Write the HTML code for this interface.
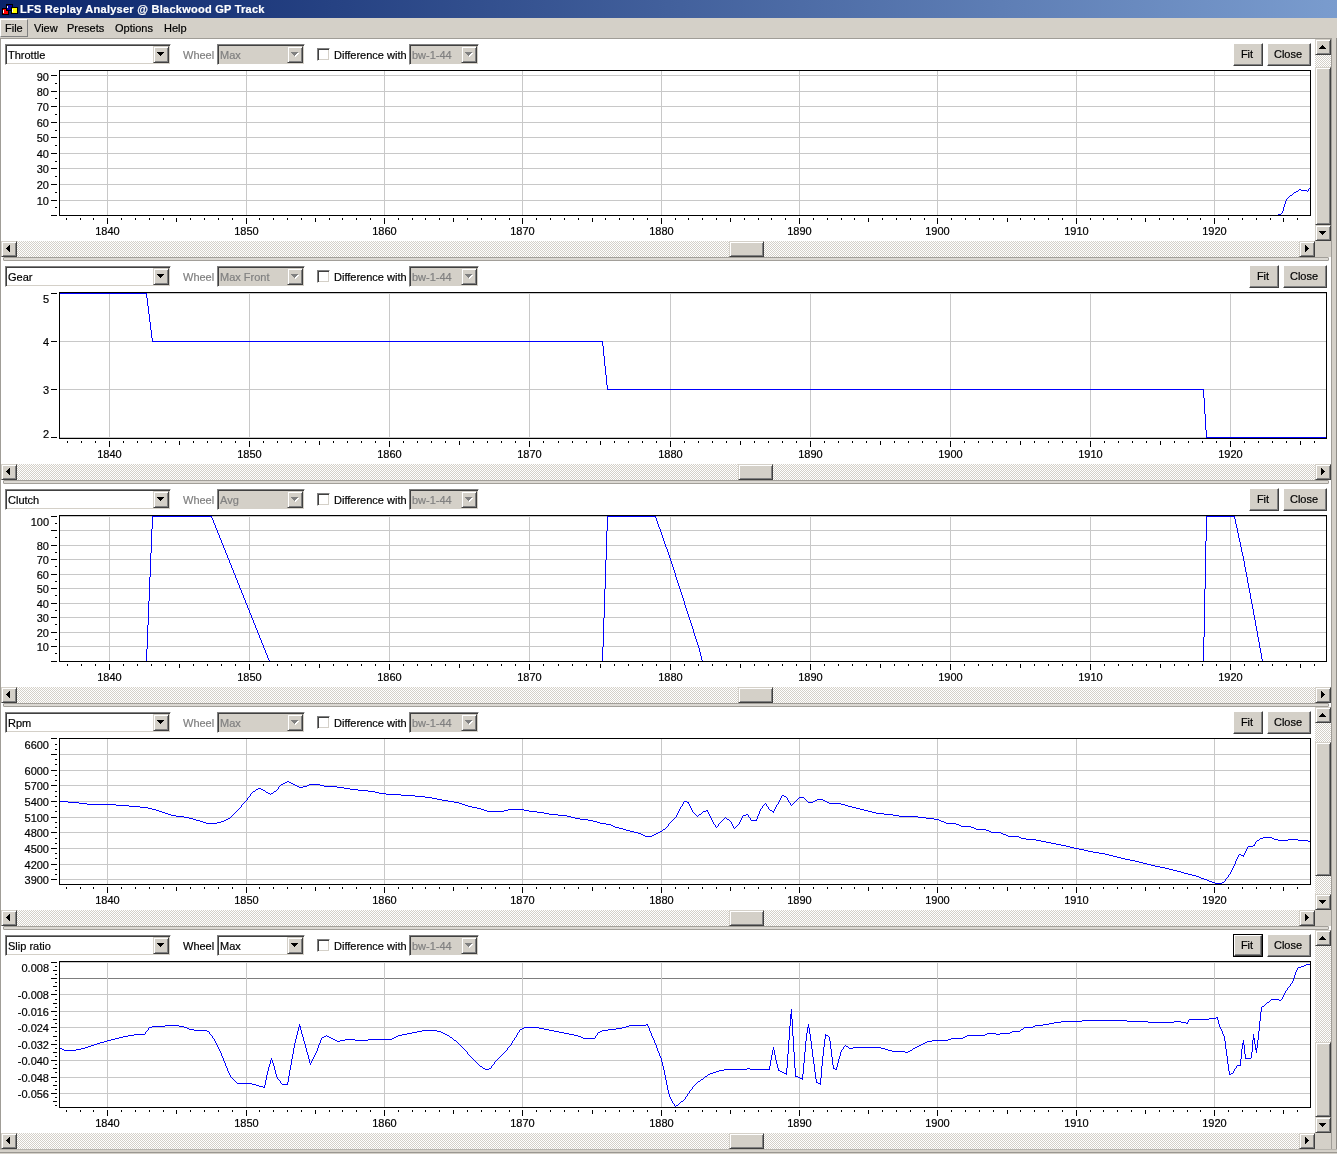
<!DOCTYPE html><html><head><meta charset="utf-8"><title>LFS Replay Analyser @ Blackwood GP Track</title><style>
*{box-sizing:border-box;margin:0;padding:0}
html,body{width:1337px;height:1154px;overflow:hidden;background:#fff}
body{position:relative;font-family:"Liberation Sans",sans-serif;font-size:11px;color:#000;line-height:13px}
.a{position:absolute}
.t{position:absolute;white-space:nowrap;line-height:13px;height:13px;-webkit-text-stroke:0.2px}
.title{left:0;top:0;width:1337px;height:18px;background:linear-gradient(90deg,#0a246a 0%,#7a9cce 100%)}
.menubar{left:0;top:18px;width:1337px;height:20px;background:#d4d0c8}
.raised{background:#d4d0c8;border:1px solid;border-color:#d4d0c8 #404040 #404040 #d4d0c8;box-shadow:inset 1px 1px 0 #fff,inset -1px -1px 0 #808080}
.btn{background:#d4d0c8;border:1px solid;border-color:#fff #404040 #404040 #fff;box-shadow:inset -1px -1px 0 #808080;text-align:center}
.sunk{border:1px solid;border-color:#808080 #fff #fff #808080;box-shadow:inset 1px 1px 0 #404040,inset -1px -1px 0 #d4d0c8}
.track{background:repeating-conic-gradient(#fff 0% 25%,#d4d0c8 0% 50%) 0 0/2px 2px}
.dis{color:#808080}
svg{position:absolute;left:0;top:0;overflow:visible}
</style></head><body><div id="root" style="position:absolute;left:0;top:0;width:1337px;height:1154px;will-change:transform">
<div class="a title"></div>
<svg width="20" height="18" viewBox="0 0 20 18" shape-rendering="crispEdges"><rect x="6" y="4" width="7" height="7" fill="#000"/><rect x="7" y="5" width="5" height="5" fill="#000094"/><rect x="7" y="6" width="1" height="3" fill="#fff"/><rect x="2" y="8" width="7" height="7" fill="#000"/><rect x="3" y="9" width="5" height="5" fill="#ff0000"/><rect x="3" y="10" width="1" height="3" fill="#fff"/><rect x="6" y="8" width="3" height="3" fill="#000"/><rect x="7" y="8" width="1" height="2" fill="#000094"/><rect x="8" y="8" width="4" height="2" fill="#000094"/><rect x="11" y="7" width="7" height="7" fill="#000"/><rect x="12" y="8" width="5" height="5" fill="#ffff00"/><rect x="12" y="9" width="1" height="3" fill="#fff"/></svg>
<div class="t" id="ttl" style="left:20px;top:3px;color:#fff;font-weight:bold;letter-spacing:0.256px">LFS Replay Analyser @ Blackwood GP Track</div>
<div class="a menubar"></div>
<div class="a" style="left:0;top:19px;width:28px;height:18px;border:1px solid;border-color:#fff #808080 #808080 #fff"></div>
<div class="t" style="left:5px;top:22px">File</div>
<div class="t" style="left:34px;top:22px">View</div>
<div class="t" style="left:67px;top:22px">Presets</div>
<div class="t" style="left:115px;top:22px">Options</div>
<div class="t" style="left:164px;top:22px">Help</div>
<div class="a" style="left:0;top:38px;width:1px;height:1116px;background:#a09d97"></div>
<div class="a" style="left:0;top:38px;width:1332px;height:1px;background:#a09d97"></div>
<div class="a" style="left:1331px;top:38px;width:6px;height:1116px;background:#d4d0c8;border-left:1px solid #a09d97;border-right:1px solid #908d87"></div>
<div class="a sunk" style="left:5px;top:44px;width:166px;height:21px;background:#fff"></div>
<div class="a raised" style="left:153px;top:46px;width:16px;height:17px"></div>
<div class="t" style="left:8px;top:49px">Throttle</div>
<div class="t dis" style="left:183px;top:49px">Wheel</div>
<div class="a sunk" style="left:217px;top:44px;width:88px;height:21px;background:#d4d0c8"></div>
<div class="a raised" style="left:287px;top:46px;width:16px;height:17px"></div>
<div class="t dis" style="left:220px;top:49px">Max</div>
<div class="a sunk" style="left:317px;top:48px;width:13px;height:13px;background:#fff"></div>
<div class="t" style="left:334px;top:49px">Difference with</div>
<div class="a sunk" style="left:409px;top:44px;width:70px;height:21px;background:#d4d0c8"></div>
<div class="a raised" style="left:461px;top:46px;width:16px;height:17px"></div>
<div class="t dis" style="left:412px;top:49px">bw-1-44</div>
<div class="a btn" style="left:1233px;top:43px;width:30px;height:23px"></div>
<div class="t" style="left:1232px;top:48px;width:30px;text-align:center">Fit</div>
<div class="a btn" style="left:1267px;top:43px;width:44px;height:23px"></div>
<div class="t" style="left:1266px;top:48px;width:44px;text-align:center">Close</div>
<div class="a track" style="left:1px;top:241px;width:1314px;height:16px"></div>
<div class="a raised" style="left:1px;top:241px;width:16px;height:16px"></div>
<div class="a raised" style="left:1299px;top:241px;width:16px;height:16px"></div>
<div class="a raised" style="left:729px;top:241px;width:35px;height:16px"></div>
<div class="a track" style="left:1315px;top:39px;width:16px;height:202px"></div>
<div class="a raised" style="left:1315px;top:39px;width:16px;height:16px"></div>
<div class="a raised" style="left:1315px;top:225px;width:16px;height:16px"></div>
<div class="a raised" style="left:1315px;top:67px;width:16px;height:158px"></div>
<div class="a" style="left:1315px;top:241px;width:16px;height:16px;background:#d4d0c8"></div>
<div class="a" style="left:3px;top:257px;width:1326px;height:4px;background:#dcd9d3;border:1px solid #a29f99;border-radius:1px"></div>
<div class="t" style="left:87px;top:225px;width:41px;text-align:center">1840</div>
<div class="t" style="left:226px;top:225px;width:41px;text-align:center">1850</div>
<div class="t" style="left:364px;top:225px;width:41px;text-align:center">1860</div>
<div class="t" style="left:502px;top:225px;width:41px;text-align:center">1870</div>
<div class="t" style="left:641px;top:225px;width:41px;text-align:center">1880</div>
<div class="t" style="left:779px;top:225px;width:41px;text-align:center">1890</div>
<div class="t" style="left:917px;top:225px;width:41px;text-align:center">1900</div>
<div class="t" style="left:1056px;top:225px;width:41px;text-align:center">1910</div>
<div class="t" style="left:1194px;top:225px;width:41px;text-align:center">1920</div>
<div class="t" style="left:0px;top:195px;width:49px;text-align:right">10</div>
<div class="t" style="left:0px;top:179px;width:49px;text-align:right">20</div>
<div class="t" style="left:0px;top:163px;width:49px;text-align:right">30</div>
<div class="t" style="left:0px;top:148px;width:49px;text-align:right">40</div>
<div class="t" style="left:0px;top:132px;width:49px;text-align:right">50</div>
<div class="t" style="left:0px;top:117px;width:49px;text-align:right">60</div>
<div class="t" style="left:0px;top:101px;width:49px;text-align:right">70</div>
<div class="t" style="left:0px;top:86px;width:49px;text-align:right">80</div>
<div class="t" style="left:0px;top:71px;width:49px;text-align:right">90</div>
<div class="a sunk" style="left:5px;top:266px;width:166px;height:21px;background:#fff"></div>
<div class="a raised" style="left:153px;top:268px;width:16px;height:17px"></div>
<div class="t" style="left:8px;top:271px">Gear</div>
<div class="t dis" style="left:183px;top:271px">Wheel</div>
<div class="a sunk" style="left:217px;top:266px;width:88px;height:21px;background:#d4d0c8"></div>
<div class="a raised" style="left:287px;top:268px;width:16px;height:17px"></div>
<div class="t dis" style="left:220px;top:271px">Max Front</div>
<div class="a sunk" style="left:317px;top:270px;width:13px;height:13px;background:#fff"></div>
<div class="t" style="left:334px;top:271px">Difference with</div>
<div class="a sunk" style="left:409px;top:266px;width:70px;height:21px;background:#d4d0c8"></div>
<div class="a raised" style="left:461px;top:268px;width:16px;height:17px"></div>
<div class="t dis" style="left:412px;top:271px">bw-1-44</div>
<div class="a btn" style="left:1249px;top:265px;width:30px;height:23px"></div>
<div class="t" style="left:1248px;top:270px;width:30px;text-align:center">Fit</div>
<div class="a btn" style="left:1283px;top:265px;width:44px;height:23px"></div>
<div class="t" style="left:1282px;top:270px;width:44px;text-align:center">Close</div>
<div class="a track" style="left:1px;top:464px;width:1330px;height:16px"></div>
<div class="a raised" style="left:1px;top:464px;width:16px;height:16px"></div>
<div class="a raised" style="left:1315px;top:464px;width:16px;height:16px"></div>
<div class="a raised" style="left:738px;top:464px;width:35px;height:16px"></div>
<div class="a" style="left:3px;top:480px;width:1326px;height:4px;background:#dcd9d3;border:1px solid #a29f99;border-radius:1px"></div>
<div class="t" style="left:89px;top:448px;width:41px;text-align:center">1840</div>
<div class="t" style="left:229px;top:448px;width:41px;text-align:center">1850</div>
<div class="t" style="left:369px;top:448px;width:41px;text-align:center">1860</div>
<div class="t" style="left:509px;top:448px;width:41px;text-align:center">1870</div>
<div class="t" style="left:650px;top:448px;width:41px;text-align:center">1880</div>
<div class="t" style="left:790px;top:448px;width:41px;text-align:center">1890</div>
<div class="t" style="left:930px;top:448px;width:41px;text-align:center">1900</div>
<div class="t" style="left:1070px;top:448px;width:41px;text-align:center">1910</div>
<div class="t" style="left:1210px;top:448px;width:41px;text-align:center">1920</div>
<div class="t" style="left:0px;top:293px;width:49px;text-align:right">5</div>
<div class="t" style="left:0px;top:336px;width:49px;text-align:right">4</div>
<div class="t" style="left:0px;top:384px;width:49px;text-align:right">3</div>
<div class="t" style="left:0px;top:428px;width:49px;text-align:right">2</div>
<div class="a sunk" style="left:5px;top:489px;width:166px;height:21px;background:#fff"></div>
<div class="a raised" style="left:153px;top:491px;width:16px;height:17px"></div>
<div class="t" style="left:8px;top:494px">Clutch</div>
<div class="t dis" style="left:183px;top:494px">Wheel</div>
<div class="a sunk" style="left:217px;top:489px;width:88px;height:21px;background:#d4d0c8"></div>
<div class="a raised" style="left:287px;top:491px;width:16px;height:17px"></div>
<div class="t dis" style="left:220px;top:494px">Avg</div>
<div class="a sunk" style="left:317px;top:493px;width:13px;height:13px;background:#fff"></div>
<div class="t" style="left:334px;top:494px">Difference with</div>
<div class="a sunk" style="left:409px;top:489px;width:70px;height:21px;background:#d4d0c8"></div>
<div class="a raised" style="left:461px;top:491px;width:16px;height:17px"></div>
<div class="t dis" style="left:412px;top:494px">bw-1-44</div>
<div class="a btn" style="left:1249px;top:488px;width:30px;height:23px"></div>
<div class="t" style="left:1248px;top:493px;width:30px;text-align:center">Fit</div>
<div class="a btn" style="left:1283px;top:488px;width:44px;height:23px"></div>
<div class="t" style="left:1282px;top:493px;width:44px;text-align:center">Close</div>
<div class="a track" style="left:1px;top:687px;width:1330px;height:16px"></div>
<div class="a raised" style="left:1px;top:687px;width:16px;height:16px"></div>
<div class="a raised" style="left:1315px;top:687px;width:16px;height:16px"></div>
<div class="a raised" style="left:738px;top:687px;width:35px;height:16px"></div>
<div class="a" style="left:3px;top:703px;width:1326px;height:4px;background:#dcd9d3;border:1px solid #a29f99;border-radius:1px"></div>
<div class="t" style="left:89px;top:671px;width:41px;text-align:center">1840</div>
<div class="t" style="left:229px;top:671px;width:41px;text-align:center">1850</div>
<div class="t" style="left:369px;top:671px;width:41px;text-align:center">1860</div>
<div class="t" style="left:509px;top:671px;width:41px;text-align:center">1870</div>
<div class="t" style="left:650px;top:671px;width:41px;text-align:center">1880</div>
<div class="t" style="left:790px;top:671px;width:41px;text-align:center">1890</div>
<div class="t" style="left:930px;top:671px;width:41px;text-align:center">1900</div>
<div class="t" style="left:1070px;top:671px;width:41px;text-align:center">1910</div>
<div class="t" style="left:1210px;top:671px;width:41px;text-align:center">1920</div>
<div class="t" style="left:0px;top:516px;width:49px;text-align:right">100</div>
<div class="t" style="left:0px;top:540px;width:49px;text-align:right">80</div>
<div class="t" style="left:0px;top:554px;width:49px;text-align:right">70</div>
<div class="t" style="left:0px;top:569px;width:49px;text-align:right">60</div>
<div class="t" style="left:0px;top:583px;width:49px;text-align:right">50</div>
<div class="t" style="left:0px;top:598px;width:49px;text-align:right">40</div>
<div class="t" style="left:0px;top:612px;width:49px;text-align:right">30</div>
<div class="t" style="left:0px;top:627px;width:49px;text-align:right">20</div>
<div class="t" style="left:0px;top:641px;width:49px;text-align:right">10</div>
<div class="a sunk" style="left:5px;top:712px;width:166px;height:21px;background:#fff"></div>
<div class="a raised" style="left:153px;top:714px;width:16px;height:17px"></div>
<div class="t" style="left:8px;top:717px">Rpm</div>
<div class="t dis" style="left:183px;top:717px">Wheel</div>
<div class="a sunk" style="left:217px;top:712px;width:88px;height:21px;background:#d4d0c8"></div>
<div class="a raised" style="left:287px;top:714px;width:16px;height:17px"></div>
<div class="t dis" style="left:220px;top:717px">Max</div>
<div class="a sunk" style="left:317px;top:716px;width:13px;height:13px;background:#fff"></div>
<div class="t" style="left:334px;top:717px">Difference with</div>
<div class="a sunk" style="left:409px;top:712px;width:70px;height:21px;background:#d4d0c8"></div>
<div class="a raised" style="left:461px;top:714px;width:16px;height:17px"></div>
<div class="t dis" style="left:412px;top:717px">bw-1-44</div>
<div class="a btn" style="left:1233px;top:711px;width:30px;height:23px"></div>
<div class="t" style="left:1232px;top:716px;width:30px;text-align:center">Fit</div>
<div class="a btn" style="left:1267px;top:711px;width:44px;height:23px"></div>
<div class="t" style="left:1266px;top:716px;width:44px;text-align:center">Close</div>
<div class="a track" style="left:1px;top:910px;width:1314px;height:16px"></div>
<div class="a raised" style="left:1px;top:910px;width:16px;height:16px"></div>
<div class="a raised" style="left:1299px;top:910px;width:16px;height:16px"></div>
<div class="a raised" style="left:729px;top:910px;width:35px;height:16px"></div>
<div class="a track" style="left:1315px;top:707px;width:16px;height:203px"></div>
<div class="a raised" style="left:1315px;top:707px;width:16px;height:16px"></div>
<div class="a raised" style="left:1315px;top:894px;width:16px;height:16px"></div>
<div class="a raised" style="left:1315px;top:742px;width:16px;height:134px"></div>
<div class="a" style="left:1315px;top:910px;width:16px;height:16px;background:#d4d0c8"></div>
<div class="a" style="left:3px;top:926px;width:1326px;height:4px;background:#dcd9d3;border:1px solid #a29f99;border-radius:1px"></div>
<div class="t" style="left:87px;top:894px;width:41px;text-align:center">1840</div>
<div class="t" style="left:226px;top:894px;width:41px;text-align:center">1850</div>
<div class="t" style="left:364px;top:894px;width:41px;text-align:center">1860</div>
<div class="t" style="left:502px;top:894px;width:41px;text-align:center">1870</div>
<div class="t" style="left:641px;top:894px;width:41px;text-align:center">1880</div>
<div class="t" style="left:779px;top:894px;width:41px;text-align:center">1890</div>
<div class="t" style="left:917px;top:894px;width:41px;text-align:center">1900</div>
<div class="t" style="left:1056px;top:894px;width:41px;text-align:center">1910</div>
<div class="t" style="left:1194px;top:894px;width:41px;text-align:center">1920</div>
<div class="t" style="left:0px;top:739px;width:49px;text-align:right">6600</div>
<div class="t" style="left:0px;top:765px;width:49px;text-align:right">6000</div>
<div class="t" style="left:0px;top:780px;width:49px;text-align:right">5700</div>
<div class="t" style="left:0px;top:796px;width:49px;text-align:right">5400</div>
<div class="t" style="left:0px;top:812px;width:49px;text-align:right">5100</div>
<div class="t" style="left:0px;top:827px;width:49px;text-align:right">4800</div>
<div class="t" style="left:0px;top:843px;width:49px;text-align:right">4500</div>
<div class="t" style="left:0px;top:859px;width:49px;text-align:right">4200</div>
<div class="t" style="left:0px;top:874px;width:49px;text-align:right">3900</div>
<div class="a sunk" style="left:5px;top:935px;width:166px;height:21px;background:#fff"></div>
<div class="a raised" style="left:153px;top:937px;width:16px;height:17px"></div>
<div class="t" style="left:8px;top:940px">Slip ratio</div>
<div class="t" style="left:183px;top:940px">Wheel</div>
<div class="a sunk" style="left:217px;top:935px;width:88px;height:21px;background:#fff"></div>
<div class="a raised" style="left:287px;top:937px;width:16px;height:17px"></div>
<div class="t" style="left:220px;top:940px">Max</div>
<div class="a sunk" style="left:317px;top:939px;width:13px;height:13px;background:#fff"></div>
<div class="t" style="left:334px;top:940px">Difference with</div>
<div class="a sunk" style="left:409px;top:935px;width:70px;height:21px;background:#d4d0c8"></div>
<div class="a raised" style="left:461px;top:937px;width:16px;height:17px"></div>
<div class="t dis" style="left:412px;top:940px">bw-1-44</div>
<div class="a" style="left:1233px;top:934px;width:30px;height:23px;background:#000"></div>
<div class="a btn" style="left:1234px;top:935px;width:28px;height:21px"></div>
<div class="t" style="left:1232px;top:939px;width:30px;text-align:center">Fit</div>
<div class="a btn" style="left:1267px;top:934px;width:44px;height:23px"></div>
<div class="t" style="left:1266px;top:939px;width:44px;text-align:center">Close</div>
<div class="a track" style="left:1px;top:1133px;width:1314px;height:16px"></div>
<div class="a raised" style="left:1px;top:1133px;width:16px;height:16px"></div>
<div class="a raised" style="left:1299px;top:1133px;width:16px;height:16px"></div>
<div class="a raised" style="left:729px;top:1133px;width:35px;height:16px"></div>
<div class="a track" style="left:1315px;top:930px;width:16px;height:203px"></div>
<div class="a raised" style="left:1315px;top:930px;width:16px;height:16px"></div>
<div class="a raised" style="left:1315px;top:1117px;width:16px;height:16px"></div>
<div class="a raised" style="left:1315px;top:1042px;width:16px;height:75px"></div>
<div class="a" style="left:1315px;top:1133px;width:16px;height:16px;background:#d4d0c8"></div>
<div class="a" style="left:0;top:1149px;width:1337px;height:5px;background:#d4d0c8;border-top:1px solid #b8b5ae"></div>
<div class="a" style="left:0;top:1152px;width:1337px;height:1px;background:#9a9791"></div>
<div class="t" style="left:87px;top:1117px;width:41px;text-align:center">1840</div>
<div class="t" style="left:226px;top:1117px;width:41px;text-align:center">1850</div>
<div class="t" style="left:364px;top:1117px;width:41px;text-align:center">1860</div>
<div class="t" style="left:502px;top:1117px;width:41px;text-align:center">1870</div>
<div class="t" style="left:641px;top:1117px;width:41px;text-align:center">1880</div>
<div class="t" style="left:779px;top:1117px;width:41px;text-align:center">1890</div>
<div class="t" style="left:917px;top:1117px;width:41px;text-align:center">1900</div>
<div class="t" style="left:1056px;top:1117px;width:41px;text-align:center">1910</div>
<div class="t" style="left:1194px;top:1117px;width:41px;text-align:center">1920</div>
<div class="t" style="left:0px;top:962px;width:49px;text-align:right">0.008</div>
<div class="t" style="left:0px;top:989px;width:49px;text-align:right">-0.008</div>
<div class="t" style="left:0px;top:1006px;width:49px;text-align:right">-0.016</div>
<div class="t" style="left:0px;top:1022px;width:49px;text-align:right">-0.024</div>
<div class="t" style="left:0px;top:1039px;width:49px;text-align:right">-0.032</div>
<div class="t" style="left:0px;top:1055px;width:49px;text-align:right">-0.040</div>
<div class="t" style="left:0px;top:1072px;width:49px;text-align:right">-0.048</div>
<div class="t" style="left:0px;top:1088px;width:49px;text-align:right">-0.056</div>
<svg width="1337" height="1154" viewBox="0 0 1337 1154" shape-rendering="crispEdges"><rect x="60" y="200" width="1250" height="1" fill="#c8c8c8"/><rect x="60" y="184" width="1250" height="1" fill="#c8c8c8"/><rect x="60" y="168" width="1250" height="1" fill="#c8c8c8"/><rect x="60" y="153" width="1250" height="1" fill="#c8c8c8"/><rect x="60" y="137" width="1250" height="1" fill="#c8c8c8"/><rect x="60" y="122" width="1250" height="1" fill="#c8c8c8"/><rect x="60" y="106" width="1250" height="1" fill="#c8c8c8"/><rect x="60" y="91" width="1250" height="1" fill="#c8c8c8"/><rect x="60" y="75" width="1250" height="1" fill="#c8c8c8"/><rect x="107" y="71" width="1" height="144" fill="#c8c8c8"/><rect x="246" y="71" width="1" height="144" fill="#c8c8c8"/><rect x="384" y="71" width="1" height="144" fill="#c8c8c8"/><rect x="522" y="71" width="1" height="144" fill="#c8c8c8"/><rect x="661" y="71" width="1" height="144" fill="#c8c8c8"/><rect x="799" y="71" width="1" height="144" fill="#c8c8c8"/><rect x="937" y="71" width="1" height="144" fill="#c8c8c8"/><rect x="1076" y="71" width="1" height="144" fill="#c8c8c8"/><rect x="1214" y="71" width="1" height="144" fill="#c8c8c8"/><path fill="none" stroke="#00f" stroke-width="1" d="M1278 214.5h3M1281 213.5h1M1287 198.5h1M1288 197.5h1M1289 196.5h1M1290 195.5h2M1292 194.5h1M1293 193.5h1M1294 192.5h2M1296 191.5h2M1298 190.5h1M1299 189.5h2M1301 190.5h6M1307 191.5h1M1309 188.5h1M1282.5 211v2M1283.5 207v4M1284.5 204v3M1285.5 201v3M1286.5 199v2M1308.5 189v2"/><rect x="59" y="70" width="1252" height="1" fill="#000"/><rect x="59" y="215" width="1252" height="1" fill="#000"/><rect x="59" y="70" width="1" height="146" fill="#000"/><rect x="1310" y="70" width="1" height="146" fill="#000"/><rect x="66" y="218" width="1" height="2" fill="#000"/><rect x="80" y="218" width="1" height="2" fill="#000"/><rect x="93" y="218" width="1" height="2" fill="#000"/><rect x="107" y="218" width="1" height="6" fill="#000"/><rect x="121" y="218" width="1" height="2" fill="#000"/><rect x="135" y="218" width="1" height="2" fill="#000"/><rect x="149" y="218" width="1" height="2" fill="#000"/><rect x="163" y="218" width="1" height="2" fill="#000"/><rect x="176" y="218" width="1" height="4" fill="#000"/><rect x="190" y="218" width="1" height="2" fill="#000"/><rect x="204" y="218" width="1" height="2" fill="#000"/><rect x="218" y="218" width="1" height="2" fill="#000"/><rect x="232" y="218" width="1" height="2" fill="#000"/><rect x="246" y="218" width="1" height="6" fill="#000"/><rect x="259" y="218" width="1" height="2" fill="#000"/><rect x="273" y="218" width="1" height="2" fill="#000"/><rect x="287" y="218" width="1" height="2" fill="#000"/><rect x="301" y="218" width="1" height="2" fill="#000"/><rect x="315" y="218" width="1" height="4" fill="#000"/><rect x="329" y="218" width="1" height="2" fill="#000"/><rect x="342" y="218" width="1" height="2" fill="#000"/><rect x="356" y="218" width="1" height="2" fill="#000"/><rect x="370" y="218" width="1" height="2" fill="#000"/><rect x="384" y="218" width="1" height="6" fill="#000"/><rect x="398" y="218" width="1" height="2" fill="#000"/><rect x="412" y="218" width="1" height="2" fill="#000"/><rect x="425" y="218" width="1" height="2" fill="#000"/><rect x="439" y="218" width="1" height="2" fill="#000"/><rect x="453" y="218" width="1" height="4" fill="#000"/><rect x="467" y="218" width="1" height="2" fill="#000"/><rect x="481" y="218" width="1" height="2" fill="#000"/><rect x="495" y="218" width="1" height="2" fill="#000"/><rect x="509" y="218" width="1" height="2" fill="#000"/><rect x="522" y="218" width="1" height="6" fill="#000"/><rect x="536" y="218" width="1" height="2" fill="#000"/><rect x="550" y="218" width="1" height="2" fill="#000"/><rect x="564" y="218" width="1" height="2" fill="#000"/><rect x="578" y="218" width="1" height="2" fill="#000"/><rect x="592" y="218" width="1" height="4" fill="#000"/><rect x="605" y="218" width="1" height="2" fill="#000"/><rect x="619" y="218" width="1" height="2" fill="#000"/><rect x="633" y="218" width="1" height="2" fill="#000"/><rect x="647" y="218" width="1" height="2" fill="#000"/><rect x="661" y="218" width="1" height="6" fill="#000"/><rect x="675" y="218" width="1" height="2" fill="#000"/><rect x="688" y="218" width="1" height="2" fill="#000"/><rect x="702" y="218" width="1" height="2" fill="#000"/><rect x="716" y="218" width="1" height="2" fill="#000"/><rect x="730" y="218" width="1" height="4" fill="#000"/><rect x="744" y="218" width="1" height="2" fill="#000"/><rect x="758" y="218" width="1" height="2" fill="#000"/><rect x="771" y="218" width="1" height="2" fill="#000"/><rect x="785" y="218" width="1" height="2" fill="#000"/><rect x="799" y="218" width="1" height="6" fill="#000"/><rect x="813" y="218" width="1" height="2" fill="#000"/><rect x="827" y="218" width="1" height="2" fill="#000"/><rect x="841" y="218" width="1" height="2" fill="#000"/><rect x="854" y="218" width="1" height="2" fill="#000"/><rect x="868" y="218" width="1" height="4" fill="#000"/><rect x="882" y="218" width="1" height="2" fill="#000"/><rect x="896" y="218" width="1" height="2" fill="#000"/><rect x="910" y="218" width="1" height="2" fill="#000"/><rect x="924" y="218" width="1" height="2" fill="#000"/><rect x="937" y="218" width="1" height="6" fill="#000"/><rect x="951" y="218" width="1" height="2" fill="#000"/><rect x="965" y="218" width="1" height="2" fill="#000"/><rect x="979" y="218" width="1" height="2" fill="#000"/><rect x="993" y="218" width="1" height="2" fill="#000"/><rect x="1007" y="218" width="1" height="4" fill="#000"/><rect x="1020" y="218" width="1" height="2" fill="#000"/><rect x="1034" y="218" width="1" height="2" fill="#000"/><rect x="1048" y="218" width="1" height="2" fill="#000"/><rect x="1062" y="218" width="1" height="2" fill="#000"/><rect x="1076" y="218" width="1" height="6" fill="#000"/><rect x="1090" y="218" width="1" height="2" fill="#000"/><rect x="1103" y="218" width="1" height="2" fill="#000"/><rect x="1117" y="218" width="1" height="2" fill="#000"/><rect x="1131" y="218" width="1" height="2" fill="#000"/><rect x="1145" y="218" width="1" height="4" fill="#000"/><rect x="1159" y="218" width="1" height="2" fill="#000"/><rect x="1173" y="218" width="1" height="2" fill="#000"/><rect x="1187" y="218" width="1" height="2" fill="#000"/><rect x="1200" y="218" width="1" height="2" fill="#000"/><rect x="1214" y="218" width="1" height="6" fill="#000"/><rect x="1228" y="218" width="1" height="2" fill="#000"/><rect x="1242" y="218" width="1" height="2" fill="#000"/><rect x="1256" y="218" width="1" height="2" fill="#000"/><rect x="1270" y="218" width="1" height="2" fill="#000"/><rect x="1283" y="218" width="1" height="4" fill="#000"/><rect x="1297" y="218" width="1" height="2" fill="#000"/><rect x="51" y="215" width="6" height="1" fill="#000"/><rect x="51" y="200" width="6" height="1" fill="#000"/><rect x="51" y="184" width="6" height="1" fill="#000"/><rect x="51" y="168" width="6" height="1" fill="#000"/><rect x="51" y="153" width="6" height="1" fill="#000"/><rect x="51" y="137" width="6" height="1" fill="#000"/><rect x="51" y="122" width="6" height="1" fill="#000"/><rect x="51" y="106" width="6" height="1" fill="#000"/><rect x="51" y="91" width="6" height="1" fill="#000"/><rect x="51" y="75" width="6" height="1" fill="#000"/><rect x="55" y="83" width="2" height="1" fill="#000"/><rect x="55" y="98" width="2" height="1" fill="#000"/><rect x="55" y="114" width="2" height="1" fill="#000"/><rect x="55" y="130" width="2" height="1" fill="#000"/><rect x="55" y="145" width="2" height="1" fill="#000"/><rect x="55" y="161" width="2" height="1" fill="#000"/><rect x="55" y="176" width="2" height="1" fill="#000"/><rect x="55" y="192" width="2" height="1" fill="#000"/><rect x="55" y="207" width="2" height="1" fill="#000"/><rect x="60" y="293" width="1266" height="1" fill="#c8c8c8"/><rect x="60" y="341" width="1266" height="1" fill="#c8c8c8"/><rect x="60" y="389" width="1266" height="1" fill="#c8c8c8"/><rect x="60" y="437" width="1266" height="1" fill="#c8c8c8"/><rect x="109" y="293" width="1" height="145" fill="#c8c8c8"/><rect x="249" y="293" width="1" height="145" fill="#c8c8c8"/><rect x="389" y="293" width="1" height="145" fill="#c8c8c8"/><rect x="529" y="293" width="1" height="145" fill="#c8c8c8"/><rect x="670" y="293" width="1" height="145" fill="#c8c8c8"/><rect x="810" y="293" width="1" height="145" fill="#c8c8c8"/><rect x="950" y="293" width="1" height="145" fill="#c8c8c8"/><rect x="1090" y="293" width="1" height="145" fill="#c8c8c8"/><rect x="1230" y="293" width="1" height="145" fill="#c8c8c8"/><path fill="none" stroke="#00f" stroke-width="1" d="M60 293.5h86M153 341.5h449M608 389.5h595M1207 437.5h119M146.5 293v5M147.5 298v8M148.5 306v8M149.5 314v8M150.5 322v8M151.5 330v8M152.5 338v4M602.5 341v5M603.5 346v10M604.5 356v10M605.5 366v9M606.5 375v10M607.5 385v5M1203.5 389v9M1204.5 398v16M1205.5 414v16M1206.5 430v8"/><rect x="59" y="292" width="1268" height="1" fill="#000"/><rect x="59" y="438" width="1268" height="1" fill="#000"/><rect x="59" y="292" width="1" height="147" fill="#000"/><rect x="1326" y="292" width="1" height="147" fill="#000"/><rect x="67" y="441" width="1" height="2" fill="#000"/><rect x="81" y="441" width="1" height="2" fill="#000"/><rect x="95" y="441" width="1" height="2" fill="#000"/><rect x="109" y="441" width="1" height="6" fill="#000"/><rect x="123" y="441" width="1" height="2" fill="#000"/><rect x="137" y="441" width="1" height="2" fill="#000"/><rect x="151" y="441" width="1" height="2" fill="#000"/><rect x="165" y="441" width="1" height="2" fill="#000"/><rect x="179" y="441" width="1" height="4" fill="#000"/><rect x="193" y="441" width="1" height="2" fill="#000"/><rect x="207" y="441" width="1" height="2" fill="#000"/><rect x="221" y="441" width="1" height="2" fill="#000"/><rect x="235" y="441" width="1" height="2" fill="#000"/><rect x="249" y="441" width="1" height="6" fill="#000"/><rect x="263" y="441" width="1" height="2" fill="#000"/><rect x="277" y="441" width="1" height="2" fill="#000"/><rect x="291" y="441" width="1" height="2" fill="#000"/><rect x="305" y="441" width="1" height="2" fill="#000"/><rect x="319" y="441" width="1" height="4" fill="#000"/><rect x="333" y="441" width="1" height="2" fill="#000"/><rect x="347" y="441" width="1" height="2" fill="#000"/><rect x="361" y="441" width="1" height="2" fill="#000"/><rect x="375" y="441" width="1" height="2" fill="#000"/><rect x="389" y="441" width="1" height="6" fill="#000"/><rect x="403" y="441" width="1" height="2" fill="#000"/><rect x="417" y="441" width="1" height="2" fill="#000"/><rect x="431" y="441" width="1" height="2" fill="#000"/><rect x="445" y="441" width="1" height="2" fill="#000"/><rect x="459" y="441" width="1" height="4" fill="#000"/><rect x="473" y="441" width="1" height="2" fill="#000"/><rect x="487" y="441" width="1" height="2" fill="#000"/><rect x="501" y="441" width="1" height="2" fill="#000"/><rect x="515" y="441" width="1" height="2" fill="#000"/><rect x="529" y="441" width="1" height="6" fill="#000"/><rect x="543" y="441" width="1" height="2" fill="#000"/><rect x="558" y="441" width="1" height="2" fill="#000"/><rect x="572" y="441" width="1" height="2" fill="#000"/><rect x="586" y="441" width="1" height="2" fill="#000"/><rect x="600" y="441" width="1" height="4" fill="#000"/><rect x="614" y="441" width="1" height="2" fill="#000"/><rect x="628" y="441" width="1" height="2" fill="#000"/><rect x="642" y="441" width="1" height="2" fill="#000"/><rect x="656" y="441" width="1" height="2" fill="#000"/><rect x="670" y="441" width="1" height="6" fill="#000"/><rect x="684" y="441" width="1" height="2" fill="#000"/><rect x="698" y="441" width="1" height="2" fill="#000"/><rect x="712" y="441" width="1" height="2" fill="#000"/><rect x="726" y="441" width="1" height="2" fill="#000"/><rect x="740" y="441" width="1" height="4" fill="#000"/><rect x="754" y="441" width="1" height="2" fill="#000"/><rect x="768" y="441" width="1" height="2" fill="#000"/><rect x="782" y="441" width="1" height="2" fill="#000"/><rect x="796" y="441" width="1" height="2" fill="#000"/><rect x="810" y="441" width="1" height="6" fill="#000"/><rect x="824" y="441" width="1" height="2" fill="#000"/><rect x="838" y="441" width="1" height="2" fill="#000"/><rect x="852" y="441" width="1" height="2" fill="#000"/><rect x="866" y="441" width="1" height="2" fill="#000"/><rect x="880" y="441" width="1" height="4" fill="#000"/><rect x="894" y="441" width="1" height="2" fill="#000"/><rect x="908" y="441" width="1" height="2" fill="#000"/><rect x="922" y="441" width="1" height="2" fill="#000"/><rect x="936" y="441" width="1" height="2" fill="#000"/><rect x="950" y="441" width="1" height="6" fill="#000"/><rect x="964" y="441" width="1" height="2" fill="#000"/><rect x="978" y="441" width="1" height="2" fill="#000"/><rect x="992" y="441" width="1" height="2" fill="#000"/><rect x="1006" y="441" width="1" height="2" fill="#000"/><rect x="1020" y="441" width="1" height="4" fill="#000"/><rect x="1034" y="441" width="1" height="2" fill="#000"/><rect x="1048" y="441" width="1" height="2" fill="#000"/><rect x="1062" y="441" width="1" height="2" fill="#000"/><rect x="1076" y="441" width="1" height="2" fill="#000"/><rect x="1090" y="441" width="1" height="6" fill="#000"/><rect x="1104" y="441" width="1" height="2" fill="#000"/><rect x="1118" y="441" width="1" height="2" fill="#000"/><rect x="1132" y="441" width="1" height="2" fill="#000"/><rect x="1146" y="441" width="1" height="2" fill="#000"/><rect x="1160" y="441" width="1" height="4" fill="#000"/><rect x="1174" y="441" width="1" height="2" fill="#000"/><rect x="1188" y="441" width="1" height="2" fill="#000"/><rect x="1202" y="441" width="1" height="2" fill="#000"/><rect x="1216" y="441" width="1" height="2" fill="#000"/><rect x="1230" y="441" width="1" height="6" fill="#000"/><rect x="1244" y="441" width="1" height="2" fill="#000"/><rect x="1258" y="441" width="1" height="2" fill="#000"/><rect x="1272" y="441" width="1" height="2" fill="#000"/><rect x="1286" y="441" width="1" height="2" fill="#000"/><rect x="1300" y="441" width="1" height="4" fill="#000"/><rect x="1314" y="441" width="1" height="2" fill="#000"/><rect x="51" y="293" width="6" height="1" fill="#000"/><rect x="51" y="341" width="6" height="1" fill="#000"/><rect x="51" y="389" width="6" height="1" fill="#000"/><rect x="51" y="437" width="6" height="1" fill="#000"/><rect x="60" y="646" width="1266" height="1" fill="#c8c8c8"/><rect x="60" y="632" width="1266" height="1" fill="#c8c8c8"/><rect x="60" y="617" width="1266" height="1" fill="#c8c8c8"/><rect x="60" y="603" width="1266" height="1" fill="#c8c8c8"/><rect x="60" y="588" width="1266" height="1" fill="#c8c8c8"/><rect x="60" y="574" width="1266" height="1" fill="#c8c8c8"/><rect x="60" y="559" width="1266" height="1" fill="#c8c8c8"/><rect x="60" y="545" width="1266" height="1" fill="#c8c8c8"/><rect x="60" y="530" width="1266" height="1" fill="#c8c8c8"/><rect x="60" y="516" width="1266" height="1" fill="#c8c8c8"/><rect x="109" y="516" width="1" height="145" fill="#c8c8c8"/><rect x="249" y="516" width="1" height="145" fill="#c8c8c8"/><rect x="389" y="516" width="1" height="145" fill="#c8c8c8"/><rect x="529" y="516" width="1" height="145" fill="#c8c8c8"/><rect x="670" y="516" width="1" height="145" fill="#c8c8c8"/><rect x="810" y="516" width="1" height="145" fill="#c8c8c8"/><rect x="950" y="516" width="1" height="145" fill="#c8c8c8"/><rect x="1090" y="516" width="1" height="145" fill="#c8c8c8"/><rect x="1230" y="516" width="1" height="145" fill="#c8c8c8"/><path fill="none" stroke="#00f" stroke-width="1" d="M153 516.5h58M146.5 649v13M147.5 625v24M148.5 601v24M149.5 577v24M150.5 553v24M151.5 529v24M152.5 516v13M211.5 516v2M212.5 518v2M213.5 520v3M214.5 523v2M215.5 525v3M216.5 528v2M217.5 530v3M218.5 533v2M219.5 535v3M220.5 538v2M221.5 540v3M222.5 543v2M223.5 545v3M224.5 548v2M225.5 550v3M226.5 553v2M227.5 555v3M228.5 558v2M229.5 560v3M230.5 563v2M231.5 565v3M232.5 568v2M233.5 570v3M234.5 573v2M235.5 575v3M236.5 578v2M237.5 580v3M238.5 583v2M239.5 585v3M240.5 588v2M241.5 590v3M242.5 593v2M243.5 595v3M244.5 598v2M245.5 600v3M246.5 603v2M247.5 605v3M248.5 608v2M249.5 610v3M250.5 613v2M251.5 615v3M252.5 618v2M253.5 620v3M254.5 623v2M255.5 625v3M256.5 628v2M257.5 630v3M258.5 633v2M259.5 635v3M260.5 638v2M261.5 640v3M262.5 643v2M263.5 645v3M264.5 648v2M265.5 650v3M266.5 653v2M267.5 655v3M268.5 658v2M269.5 660v2"/><path fill="none" stroke="#00f" stroke-width="1" d="M608 516.5h47M602.5 647v15M603.5 618v29M604.5 589v29M605.5 560v29M606.5 531v29M607.5 516v15M655.5 516v2M656.5 518v3M657.5 521v3M658.5 524v3M659.5 527v2M660.5 529v3M661.5 532v3M662.5 535v3M663.5 538v3M664.5 541v3M665.5 544v3M666.5 547v2M667.5 549v3M668.5 552v3M669.5 555v3M670.5 558v3M671.5 561v3M672.5 564v3M673.5 567v3M674.5 570v3M675.5 573v4M676.5 577v3M677.5 580v3M678.5 583v3M679.5 586v3M680.5 589v3M681.5 592v3M682.5 595v3M683.5 598v3M684.5 601v4M685.5 605v3M686.5 608v3M687.5 611v3M688.5 614v3M689.5 617v3M690.5 620v3M691.5 623v3M692.5 626v3M693.5 629v4M694.5 633v3M695.5 636v3M696.5 639v3M697.5 642v3M698.5 645v3M699.5 648v4M700.5 652v4M701.5 656v4M702.5 660v2"/><path fill="none" stroke="#00f" stroke-width="1" d="M1207 516.5h27M1203.5 637v25M1204.5 589v48M1205.5 541v48M1206.5 516v25M1234.5 516v3M1235.5 519v5M1236.5 524v4M1237.5 528v5M1238.5 533v5M1239.5 538v4M1240.5 542v5M1241.5 547v5M1242.5 552v4M1243.5 556v5M1244.5 561v6M1245.5 567v5M1246.5 572v5M1247.5 577v6M1248.5 583v5M1249.5 588v5M1250.5 593v6M1251.5 599v5M1252.5 604v5M1253.5 609v6M1254.5 615v5M1255.5 620v6M1256.5 626v5M1257.5 631v6M1258.5 637v5M1259.5 642v6M1260.5 648v5M1261.5 653v6M1262.5 659v3"/><rect x="59" y="515" width="1268" height="1" fill="#000"/><rect x="59" y="661" width="1268" height="1" fill="#000"/><rect x="59" y="515" width="1" height="147" fill="#000"/><rect x="1326" y="515" width="1" height="147" fill="#000"/><rect x="67" y="664" width="1" height="2" fill="#000"/><rect x="81" y="664" width="1" height="2" fill="#000"/><rect x="95" y="664" width="1" height="2" fill="#000"/><rect x="109" y="664" width="1" height="6" fill="#000"/><rect x="123" y="664" width="1" height="2" fill="#000"/><rect x="137" y="664" width="1" height="2" fill="#000"/><rect x="151" y="664" width="1" height="2" fill="#000"/><rect x="165" y="664" width="1" height="2" fill="#000"/><rect x="179" y="664" width="1" height="4" fill="#000"/><rect x="193" y="664" width="1" height="2" fill="#000"/><rect x="207" y="664" width="1" height="2" fill="#000"/><rect x="221" y="664" width="1" height="2" fill="#000"/><rect x="235" y="664" width="1" height="2" fill="#000"/><rect x="249" y="664" width="1" height="6" fill="#000"/><rect x="263" y="664" width="1" height="2" fill="#000"/><rect x="277" y="664" width="1" height="2" fill="#000"/><rect x="291" y="664" width="1" height="2" fill="#000"/><rect x="305" y="664" width="1" height="2" fill="#000"/><rect x="319" y="664" width="1" height="4" fill="#000"/><rect x="333" y="664" width="1" height="2" fill="#000"/><rect x="347" y="664" width="1" height="2" fill="#000"/><rect x="361" y="664" width="1" height="2" fill="#000"/><rect x="375" y="664" width="1" height="2" fill="#000"/><rect x="389" y="664" width="1" height="6" fill="#000"/><rect x="403" y="664" width="1" height="2" fill="#000"/><rect x="417" y="664" width="1" height="2" fill="#000"/><rect x="431" y="664" width="1" height="2" fill="#000"/><rect x="445" y="664" width="1" height="2" fill="#000"/><rect x="459" y="664" width="1" height="4" fill="#000"/><rect x="473" y="664" width="1" height="2" fill="#000"/><rect x="487" y="664" width="1" height="2" fill="#000"/><rect x="501" y="664" width="1" height="2" fill="#000"/><rect x="515" y="664" width="1" height="2" fill="#000"/><rect x="529" y="664" width="1" height="6" fill="#000"/><rect x="543" y="664" width="1" height="2" fill="#000"/><rect x="558" y="664" width="1" height="2" fill="#000"/><rect x="572" y="664" width="1" height="2" fill="#000"/><rect x="586" y="664" width="1" height="2" fill="#000"/><rect x="600" y="664" width="1" height="4" fill="#000"/><rect x="614" y="664" width="1" height="2" fill="#000"/><rect x="628" y="664" width="1" height="2" fill="#000"/><rect x="642" y="664" width="1" height="2" fill="#000"/><rect x="656" y="664" width="1" height="2" fill="#000"/><rect x="670" y="664" width="1" height="6" fill="#000"/><rect x="684" y="664" width="1" height="2" fill="#000"/><rect x="698" y="664" width="1" height="2" fill="#000"/><rect x="712" y="664" width="1" height="2" fill="#000"/><rect x="726" y="664" width="1" height="2" fill="#000"/><rect x="740" y="664" width="1" height="4" fill="#000"/><rect x="754" y="664" width="1" height="2" fill="#000"/><rect x="768" y="664" width="1" height="2" fill="#000"/><rect x="782" y="664" width="1" height="2" fill="#000"/><rect x="796" y="664" width="1" height="2" fill="#000"/><rect x="810" y="664" width="1" height="6" fill="#000"/><rect x="824" y="664" width="1" height="2" fill="#000"/><rect x="838" y="664" width="1" height="2" fill="#000"/><rect x="852" y="664" width="1" height="2" fill="#000"/><rect x="866" y="664" width="1" height="2" fill="#000"/><rect x="880" y="664" width="1" height="4" fill="#000"/><rect x="894" y="664" width="1" height="2" fill="#000"/><rect x="908" y="664" width="1" height="2" fill="#000"/><rect x="922" y="664" width="1" height="2" fill="#000"/><rect x="936" y="664" width="1" height="2" fill="#000"/><rect x="950" y="664" width="1" height="6" fill="#000"/><rect x="964" y="664" width="1" height="2" fill="#000"/><rect x="978" y="664" width="1" height="2" fill="#000"/><rect x="992" y="664" width="1" height="2" fill="#000"/><rect x="1006" y="664" width="1" height="2" fill="#000"/><rect x="1020" y="664" width="1" height="4" fill="#000"/><rect x="1034" y="664" width="1" height="2" fill="#000"/><rect x="1048" y="664" width="1" height="2" fill="#000"/><rect x="1062" y="664" width="1" height="2" fill="#000"/><rect x="1076" y="664" width="1" height="2" fill="#000"/><rect x="1090" y="664" width="1" height="6" fill="#000"/><rect x="1104" y="664" width="1" height="2" fill="#000"/><rect x="1118" y="664" width="1" height="2" fill="#000"/><rect x="1132" y="664" width="1" height="2" fill="#000"/><rect x="1146" y="664" width="1" height="2" fill="#000"/><rect x="1160" y="664" width="1" height="4" fill="#000"/><rect x="1174" y="664" width="1" height="2" fill="#000"/><rect x="1188" y="664" width="1" height="2" fill="#000"/><rect x="1202" y="664" width="1" height="2" fill="#000"/><rect x="1216" y="664" width="1" height="2" fill="#000"/><rect x="1230" y="664" width="1" height="6" fill="#000"/><rect x="1244" y="664" width="1" height="2" fill="#000"/><rect x="1258" y="664" width="1" height="2" fill="#000"/><rect x="1272" y="664" width="1" height="2" fill="#000"/><rect x="1286" y="664" width="1" height="2" fill="#000"/><rect x="1300" y="664" width="1" height="4" fill="#000"/><rect x="1314" y="664" width="1" height="2" fill="#000"/><rect x="51" y="661" width="6" height="1" fill="#000"/><rect x="51" y="646" width="6" height="1" fill="#000"/><rect x="51" y="632" width="6" height="1" fill="#000"/><rect x="51" y="617" width="6" height="1" fill="#000"/><rect x="51" y="603" width="6" height="1" fill="#000"/><rect x="51" y="588" width="6" height="1" fill="#000"/><rect x="51" y="574" width="6" height="1" fill="#000"/><rect x="51" y="559" width="6" height="1" fill="#000"/><rect x="51" y="545" width="6" height="1" fill="#000"/><rect x="51" y="530" width="6" height="1" fill="#000"/><rect x="51" y="516" width="6" height="1" fill="#000"/><rect x="55" y="523" width="2" height="1" fill="#000"/><rect x="55" y="537" width="2" height="1" fill="#000"/><rect x="55" y="552" width="2" height="1" fill="#000"/><rect x="55" y="566" width="2" height="1" fill="#000"/><rect x="55" y="581" width="2" height="1" fill="#000"/><rect x="55" y="595" width="2" height="1" fill="#000"/><rect x="55" y="610" width="2" height="1" fill="#000"/><rect x="55" y="624" width="2" height="1" fill="#000"/><rect x="55" y="639" width="2" height="1" fill="#000"/><rect x="55" y="653" width="2" height="1" fill="#000"/><rect x="60" y="879" width="1250" height="1" fill="#c8c8c8"/><rect x="60" y="864" width="1250" height="1" fill="#c8c8c8"/><rect x="60" y="848" width="1250" height="1" fill="#c8c8c8"/><rect x="60" y="832" width="1250" height="1" fill="#c8c8c8"/><rect x="60" y="817" width="1250" height="1" fill="#c8c8c8"/><rect x="60" y="801" width="1250" height="1" fill="#c8c8c8"/><rect x="60" y="785" width="1250" height="1" fill="#c8c8c8"/><rect x="60" y="770" width="1250" height="1" fill="#c8c8c8"/><rect x="60" y="754" width="1250" height="1" fill="#c8c8c8"/><rect x="107" y="739" width="1" height="145" fill="#c8c8c8"/><rect x="246" y="739" width="1" height="145" fill="#c8c8c8"/><rect x="384" y="739" width="1" height="145" fill="#c8c8c8"/><rect x="522" y="739" width="1" height="145" fill="#c8c8c8"/><rect x="661" y="739" width="1" height="145" fill="#c8c8c8"/><rect x="799" y="739" width="1" height="145" fill="#c8c8c8"/><rect x="937" y="739" width="1" height="145" fill="#c8c8c8"/><rect x="1076" y="739" width="1" height="145" fill="#c8c8c8"/><rect x="1214" y="739" width="1" height="145" fill="#c8c8c8"/><path fill="none" stroke="#00f" stroke-width="1" d="M60 801.5h8M68 802.5h11M79 803.5h8M87 804.5h29M116 805.5h13M129 806.5h11M140 807.5h8M148 808.5h4M152 809.5h4M156 810.5h3M159 811.5h3M162 812.5h3M165 813.5h3M168 814.5h3M171 815.5h5M176 816.5h8M184 817.5h5M189 818.5h4M193 819.5h3M196 820.5h4M200 821.5h3M203 822.5h3M206 823.5h11M217 822.5h4M221 821.5h3M224 820.5h2M226 819.5h2M228 818.5h2M230 817.5h1M231 816.5h1M232 815.5h1M233 814.5h1M234 813.5h1M235 812.5h1M236 811.5h1M237 810.5h1M238 809.5h1M239 808.5h1M240 807.5h1M242 804.5h1M243 803.5h1M244 802.5h1M245 801.5h1M246 800.5h1M248 797.5h1M249 796.5h1M251 793.5h1M252 792.5h1M253 791.5h2M255 790.5h1M256 789.5h2M258 788.5h3M261 789.5h2M263 790.5h2M265 791.5h1M266 792.5h2M268 793.5h2M270 794.5h1M271 793.5h2M273 792.5h1M274 791.5h2M276 790.5h1M277 789.5h1M279 786.5h1M280 785.5h1M281 784.5h2M283 783.5h2M285 782.5h2M287 781.5h2M289 782.5h2M291 783.5h2M293 784.5h2M295 785.5h2M297 786.5h2M299 787.5h4M303 786.5h4M307 785.5h2M309 784.5h11M320 785.5h4M324 786.5h13M337 787.5h7M344 788.5h6M350 789.5h8M358 790.5h10M368 791.5h7M375 792.5h4M379 793.5h7M386 794.5h15M401 795.5h14M415 796.5h10M425 797.5h7M432 798.5h5M437 799.5h5M442 800.5h6M448 801.5h6M454 802.5h5M459 803.5h3M462 804.5h3M465 805.5h3M468 806.5h4M472 807.5h5M477 808.5h4M481 809.5h3M484 810.5h3M487 811.5h17M504 810.5h4M508 809.5h16M524 810.5h5M529 811.5h8M537 812.5h7M544 813.5h5M549 814.5h9M558 815.5h9M567 816.5h4M571 817.5h4M575 818.5h5M580 819.5h8M588 820.5h5M593 821.5h4M597 822.5h3M600 823.5h6M606 824.5h5M611 825.5h2M613 826.5h2M615 827.5h4M619 828.5h4M623 829.5h3M626 830.5h4M630 831.5h4M634 832.5h4M638 833.5h3M641 834.5h2M643 835.5h2M645 836.5h7M652 835.5h2M654 834.5h2M656 833.5h2M658 832.5h2M660 831.5h2M662 830.5h1M663 829.5h2M665 828.5h1M666 827.5h1M667 826.5h1M669 823.5h1M670 822.5h1M671 821.5h1M672 820.5h1M673 819.5h1M674 818.5h1M675 817.5h1M681 806.5h1M684 801.5h3M687 802.5h1M693 812.5h1M694 813.5h1M695 814.5h1M696 815.5h1M697 816.5h1M698 815.5h1M699 814.5h2M701 813.5h1M702 812.5h1M703 811.5h3M706 810.5h1M714 824.5h1M716 827.5h1M717 826.5h1M719 823.5h1M720 822.5h1M721 821.5h1M722 820.5h1M723 819.5h1M724 818.5h1M725 817.5h1M726 818.5h1M727 819.5h2M729 820.5h1M730 821.5h1M734 828.5h1M735 827.5h1M736 826.5h1M737 825.5h1M738 824.5h1M743 815.5h3M746 814.5h2M749 817.5h1M751 820.5h5M761 808.5h1M763 805.5h1M764 804.5h1M765 803.5h1M767 806.5h1M769 809.5h1M770 810.5h2M772 811.5h1M777 804.5h1M782 795.5h2M784 796.5h2M786 797.5h1M789 802.5h1M791 805.5h1M792 804.5h1M793 803.5h1M794 802.5h1M795 801.5h1M796 800.5h1M797 799.5h1M798 798.5h1M799 797.5h5M804 798.5h1M805 799.5h1M806 800.5h1M807 801.5h1M808 802.5h5M813 801.5h2M815 800.5h2M817 799.5h6M823 800.5h2M825 801.5h2M827 802.5h2M829 803.5h12M841 804.5h4M845 805.5h3M848 806.5h4M852 807.5h4M856 808.5h4M860 809.5h4M864 810.5h4M868 811.5h4M872 812.5h4M876 813.5h8M884 814.5h9M893 815.5h6M899 816.5h19M918 817.5h8M926 818.5h8M934 819.5h5M939 820.5h2M941 821.5h3M944 822.5h2M946 823.5h10M956 824.5h3M959 825.5h2M961 826.5h10M971 827.5h3M974 828.5h2M976 829.5h10M986 830.5h3M989 831.5h2M991 832.5h10M1001 833.5h2M1003 834.5h3M1006 835.5h2M1008 836.5h11M1019 837.5h2M1021 838.5h5M1026 839.5h10M1036 840.5h5M1041 841.5h5M1046 842.5h5M1051 843.5h5M1056 844.5h5M1061 845.5h5M1066 846.5h4M1070 847.5h4M1074 848.5h5M1079 849.5h5M1084 850.5h4M1088 851.5h5M1093 852.5h6M1099 853.5h6M1105 854.5h4M1109 855.5h4M1113 856.5h4M1117 857.5h4M1121 858.5h4M1125 859.5h5M1130 860.5h5M1135 861.5h4M1139 862.5h4M1143 863.5h4M1147 864.5h4M1151 865.5h4M1155 866.5h5M1160 867.5h5M1165 868.5h4M1169 869.5h4M1173 870.5h4M1177 871.5h4M1181 872.5h3M1184 873.5h4M1188 874.5h4M1192 875.5h4M1196 876.5h3M1199 877.5h2M1201 878.5h3M1204 879.5h3M1207 880.5h2M1209 881.5h3M1212 882.5h3M1215 883.5h7M1222 882.5h2M1224 881.5h1M1226 878.5h1M1227 877.5h1M1229 874.5h1M1239 854.5h2M1241 855.5h2M1248 846.5h5M1253 845.5h1M1256 841.5h1M1257 840.5h2M1259 839.5h1M1260 838.5h3M1263 837.5h9M1272 838.5h2M1274 839.5h4M1278 840.5h10M1288 839.5h10M1298 840.5h10M1308 841.5h2M241.5 805v2M247.5 798v2M250.5 794v2M278.5 787v2M668.5 824v2M676.5 815v2M677.5 813v2M678.5 811v2M679.5 809v2M680.5 807v2M682.5 804v2M683.5 802v2M688.5 802v2M689.5 804v2M690.5 806v2M691.5 808v2M692.5 810v2M707.5 810v2M708.5 812v2M709.5 814v2M710.5 816v2M711.5 818v2M712.5 820v2M713.5 822v2M715.5 825v2M718.5 824v2M731.5 822v2M732.5 824v2M733.5 826v2M739.5 822v2M740.5 820v2M741.5 818v2M742.5 816v2M748.5 815v2M750.5 818v2M756.5 819v2M757.5 816v3M758.5 814v2M759.5 811v3M760.5 809v2M762.5 806v2M766.5 804v2M768.5 807v2M773.5 811v2M774.5 809v2M775.5 807v2M776.5 805v2M778.5 802v2M779.5 800v2M780.5 798v2M781.5 796v2M787.5 798v2M788.5 800v2M790.5 803v2M1225.5 879v2M1228.5 875v2M1230.5 872v2M1231.5 870v2M1232.5 868v2M1233.5 866v2M1234.5 864v2M1235.5 861v3M1236.5 859v2M1237.5 857v2M1238.5 855v2M1243.5 855v2M1244.5 853v2M1245.5 851v2M1246.5 849v2M1247.5 847v2M1254.5 844v2M1255.5 842v2"/><rect x="59" y="738" width="1252" height="1" fill="#000"/><rect x="59" y="884" width="1252" height="1" fill="#000"/><rect x="59" y="738" width="1" height="147" fill="#000"/><rect x="1310" y="738" width="1" height="147" fill="#000"/><rect x="66" y="887" width="1" height="2" fill="#000"/><rect x="80" y="887" width="1" height="2" fill="#000"/><rect x="93" y="887" width="1" height="2" fill="#000"/><rect x="107" y="887" width="1" height="6" fill="#000"/><rect x="121" y="887" width="1" height="2" fill="#000"/><rect x="135" y="887" width="1" height="2" fill="#000"/><rect x="149" y="887" width="1" height="2" fill="#000"/><rect x="163" y="887" width="1" height="2" fill="#000"/><rect x="176" y="887" width="1" height="4" fill="#000"/><rect x="190" y="887" width="1" height="2" fill="#000"/><rect x="204" y="887" width="1" height="2" fill="#000"/><rect x="218" y="887" width="1" height="2" fill="#000"/><rect x="232" y="887" width="1" height="2" fill="#000"/><rect x="246" y="887" width="1" height="6" fill="#000"/><rect x="259" y="887" width="1" height="2" fill="#000"/><rect x="273" y="887" width="1" height="2" fill="#000"/><rect x="287" y="887" width="1" height="2" fill="#000"/><rect x="301" y="887" width="1" height="2" fill="#000"/><rect x="315" y="887" width="1" height="4" fill="#000"/><rect x="329" y="887" width="1" height="2" fill="#000"/><rect x="342" y="887" width="1" height="2" fill="#000"/><rect x="356" y="887" width="1" height="2" fill="#000"/><rect x="370" y="887" width="1" height="2" fill="#000"/><rect x="384" y="887" width="1" height="6" fill="#000"/><rect x="398" y="887" width="1" height="2" fill="#000"/><rect x="412" y="887" width="1" height="2" fill="#000"/><rect x="425" y="887" width="1" height="2" fill="#000"/><rect x="439" y="887" width="1" height="2" fill="#000"/><rect x="453" y="887" width="1" height="4" fill="#000"/><rect x="467" y="887" width="1" height="2" fill="#000"/><rect x="481" y="887" width="1" height="2" fill="#000"/><rect x="495" y="887" width="1" height="2" fill="#000"/><rect x="509" y="887" width="1" height="2" fill="#000"/><rect x="522" y="887" width="1" height="6" fill="#000"/><rect x="536" y="887" width="1" height="2" fill="#000"/><rect x="550" y="887" width="1" height="2" fill="#000"/><rect x="564" y="887" width="1" height="2" fill="#000"/><rect x="578" y="887" width="1" height="2" fill="#000"/><rect x="592" y="887" width="1" height="4" fill="#000"/><rect x="605" y="887" width="1" height="2" fill="#000"/><rect x="619" y="887" width="1" height="2" fill="#000"/><rect x="633" y="887" width="1" height="2" fill="#000"/><rect x="647" y="887" width="1" height="2" fill="#000"/><rect x="661" y="887" width="1" height="6" fill="#000"/><rect x="675" y="887" width="1" height="2" fill="#000"/><rect x="688" y="887" width="1" height="2" fill="#000"/><rect x="702" y="887" width="1" height="2" fill="#000"/><rect x="716" y="887" width="1" height="2" fill="#000"/><rect x="730" y="887" width="1" height="4" fill="#000"/><rect x="744" y="887" width="1" height="2" fill="#000"/><rect x="758" y="887" width="1" height="2" fill="#000"/><rect x="771" y="887" width="1" height="2" fill="#000"/><rect x="785" y="887" width="1" height="2" fill="#000"/><rect x="799" y="887" width="1" height="6" fill="#000"/><rect x="813" y="887" width="1" height="2" fill="#000"/><rect x="827" y="887" width="1" height="2" fill="#000"/><rect x="841" y="887" width="1" height="2" fill="#000"/><rect x="854" y="887" width="1" height="2" fill="#000"/><rect x="868" y="887" width="1" height="4" fill="#000"/><rect x="882" y="887" width="1" height="2" fill="#000"/><rect x="896" y="887" width="1" height="2" fill="#000"/><rect x="910" y="887" width="1" height="2" fill="#000"/><rect x="924" y="887" width="1" height="2" fill="#000"/><rect x="937" y="887" width="1" height="6" fill="#000"/><rect x="951" y="887" width="1" height="2" fill="#000"/><rect x="965" y="887" width="1" height="2" fill="#000"/><rect x="979" y="887" width="1" height="2" fill="#000"/><rect x="993" y="887" width="1" height="2" fill="#000"/><rect x="1007" y="887" width="1" height="4" fill="#000"/><rect x="1020" y="887" width="1" height="2" fill="#000"/><rect x="1034" y="887" width="1" height="2" fill="#000"/><rect x="1048" y="887" width="1" height="2" fill="#000"/><rect x="1062" y="887" width="1" height="2" fill="#000"/><rect x="1076" y="887" width="1" height="6" fill="#000"/><rect x="1090" y="887" width="1" height="2" fill="#000"/><rect x="1103" y="887" width="1" height="2" fill="#000"/><rect x="1117" y="887" width="1" height="2" fill="#000"/><rect x="1131" y="887" width="1" height="2" fill="#000"/><rect x="1145" y="887" width="1" height="4" fill="#000"/><rect x="1159" y="887" width="1" height="2" fill="#000"/><rect x="1173" y="887" width="1" height="2" fill="#000"/><rect x="1187" y="887" width="1" height="2" fill="#000"/><rect x="1200" y="887" width="1" height="2" fill="#000"/><rect x="1214" y="887" width="1" height="6" fill="#000"/><rect x="1228" y="887" width="1" height="2" fill="#000"/><rect x="1242" y="887" width="1" height="2" fill="#000"/><rect x="1256" y="887" width="1" height="2" fill="#000"/><rect x="1270" y="887" width="1" height="2" fill="#000"/><rect x="1283" y="887" width="1" height="4" fill="#000"/><rect x="1297" y="887" width="1" height="2" fill="#000"/><rect x="51" y="879" width="6" height="1" fill="#000"/><rect x="51" y="864" width="6" height="1" fill="#000"/><rect x="51" y="848" width="6" height="1" fill="#000"/><rect x="51" y="832" width="6" height="1" fill="#000"/><rect x="51" y="817" width="6" height="1" fill="#000"/><rect x="51" y="801" width="6" height="1" fill="#000"/><rect x="51" y="785" width="6" height="1" fill="#000"/><rect x="51" y="770" width="6" height="1" fill="#000"/><rect x="51" y="754" width="6" height="1" fill="#000"/><rect x="51" y="738" width="6" height="1" fill="#000"/><rect x="55" y="874" width="2" height="1" fill="#000"/><rect x="55" y="869" width="2" height="1" fill="#000"/><rect x="55" y="858" width="2" height="1" fill="#000"/><rect x="55" y="853" width="2" height="1" fill="#000"/><rect x="55" y="843" width="2" height="1" fill="#000"/><rect x="55" y="838" width="2" height="1" fill="#000"/><rect x="55" y="827" width="2" height="1" fill="#000"/><rect x="55" y="822" width="2" height="1" fill="#000"/><rect x="55" y="811" width="2" height="1" fill="#000"/><rect x="55" y="806" width="2" height="1" fill="#000"/><rect x="55" y="796" width="2" height="1" fill="#000"/><rect x="55" y="791" width="2" height="1" fill="#000"/><rect x="55" y="780" width="2" height="1" fill="#000"/><rect x="55" y="775" width="2" height="1" fill="#000"/><rect x="55" y="764" width="2" height="1" fill="#000"/><rect x="55" y="759" width="2" height="1" fill="#000"/><rect x="55" y="749" width="2" height="1" fill="#000"/><rect x="55" y="744" width="2" height="1" fill="#000"/><rect x="60" y="1093" width="1250" height="1" fill="#c8c8c8"/><rect x="60" y="1077" width="1250" height="1" fill="#c8c8c8"/><rect x="60" y="1060" width="1250" height="1" fill="#c8c8c8"/><rect x="60" y="1044" width="1250" height="1" fill="#c8c8c8"/><rect x="60" y="1027" width="1250" height="1" fill="#c8c8c8"/><rect x="60" y="1011" width="1250" height="1" fill="#c8c8c8"/><rect x="60" y="994" width="1250" height="1" fill="#c8c8c8"/><rect x="60" y="978" width="1250" height="1" fill="#7d7d7d"/><rect x="60" y="962" width="1250" height="1" fill="#c8c8c8"/><rect x="107" y="962" width="1" height="145" fill="#c8c8c8"/><rect x="246" y="962" width="1" height="145" fill="#c8c8c8"/><rect x="384" y="962" width="1" height="145" fill="#c8c8c8"/><rect x="522" y="962" width="1" height="145" fill="#c8c8c8"/><rect x="661" y="962" width="1" height="145" fill="#c8c8c8"/><rect x="799" y="962" width="1" height="145" fill="#c8c8c8"/><rect x="937" y="962" width="1" height="145" fill="#c8c8c8"/><rect x="1076" y="962" width="1" height="145" fill="#c8c8c8"/><rect x="1214" y="962" width="1" height="145" fill="#c8c8c8"/><path fill="none" stroke="#00f" stroke-width="1" d="M60 1048.5h2M62 1049.5h2M64 1050.5h12M76 1049.5h5M81 1048.5h4M85 1047.5h3M88 1046.5h3M91 1045.5h3M94 1044.5h3M97 1043.5h3M100 1042.5h4M104 1041.5h3M107 1040.5h4M111 1039.5h4M115 1038.5h4M119 1037.5h4M123 1036.5h5M128 1035.5h6M134 1034.5h11M146 1031.5h1M147 1030.5h1M149 1027.5h3M152 1026.5h13M165 1025.5h14M179 1026.5h5M184 1027.5h3M187 1028.5h2M189 1029.5h5M194 1030.5h13M207 1031.5h2M210 1034.5h1M211 1035.5h1M213 1038.5h1M231 1077.5h1M232 1078.5h1M233 1079.5h1M234 1080.5h1M235 1081.5h1M236 1082.5h1M237 1083.5h15M252 1084.5h4M256 1085.5h3M259 1086.5h4M263 1087.5h1M278 1079.5h1M279 1080.5h1M281 1083.5h1M282 1084.5h5M322 1037.5h2M324 1036.5h2M326 1035.5h1M327 1036.5h2M329 1037.5h2M331 1038.5h2M333 1039.5h2M335 1040.5h2M337 1041.5h3M340 1040.5h5M345 1039.5h10M355 1040.5h13M368 1039.5h24M392 1038.5h2M394 1037.5h2M396 1036.5h2M398 1035.5h4M402 1034.5h5M407 1033.5h5M412 1032.5h5M417 1031.5h5M422 1030.5h15M437 1031.5h4M441 1032.5h2M443 1033.5h2M445 1034.5h2M447 1035.5h2M449 1036.5h1M450 1037.5h2M452 1038.5h1M453 1039.5h1M454 1040.5h2M456 1041.5h1M457 1042.5h1M458 1043.5h1M459 1044.5h1M460 1045.5h1M461 1046.5h1M462 1047.5h1M463 1048.5h1M464 1049.5h1M465 1050.5h1M466 1051.5h1M468 1054.5h1M469 1055.5h1M470 1056.5h1M471 1057.5h1M472 1058.5h1M473 1059.5h1M474 1060.5h1M475 1061.5h1M476 1062.5h1M477 1063.5h1M478 1064.5h1M479 1065.5h1M480 1066.5h2M482 1067.5h1M483 1068.5h2M485 1069.5h4M489 1068.5h2M492 1065.5h1M493 1064.5h1M495 1061.5h1M496 1060.5h1M497 1059.5h1M498 1058.5h1M499 1057.5h1M500 1056.5h1M501 1055.5h1M502 1054.5h1M503 1053.5h1M504 1052.5h1M505 1051.5h1M506 1050.5h1M508 1047.5h1M509 1046.5h1M510 1045.5h1M513 1040.5h1M515 1037.5h1M518 1032.5h1M520 1029.5h2M522 1028.5h2M524 1027.5h15M539 1028.5h5M544 1029.5h5M549 1030.5h5M554 1031.5h5M559 1032.5h5M564 1033.5h5M569 1034.5h5M574 1035.5h4M578 1036.5h3M581 1037.5h2M583 1038.5h12M596 1035.5h1M598 1032.5h2M600 1031.5h2M602 1030.5h6M608 1029.5h8M616 1028.5h6M622 1027.5h4M626 1026.5h3M629 1025.5h17M646 1024.5h1M673 1103.5h1M675 1106.5h1M676 1105.5h2M678 1104.5h1M679 1103.5h1M680 1102.5h1M681 1101.5h2M683 1100.5h1M684 1099.5h1M686 1096.5h1M688 1093.5h1M690 1090.5h1M691 1089.5h1M693 1086.5h1M694 1085.5h1M695 1084.5h1M696 1083.5h1M697 1082.5h1M698 1081.5h2M700 1080.5h1M701 1079.5h2M703 1078.5h1M704 1077.5h1M705 1076.5h2M707 1075.5h1M708 1074.5h2M710 1073.5h3M713 1072.5h3M716 1071.5h3M719 1070.5h5M724 1069.5h23M747 1068.5h3M750 1069.5h19M779 1070.5h1M780 1071.5h2M782 1072.5h2M784 1073.5h2M796 1076.5h2M798 1077.5h2M800 1078.5h2M817 1082.5h1M818 1083.5h2M826 1035.5h2M828 1036.5h1M834 1068.5h1M835 1069.5h1M842 1049.5h1M844 1046.5h1M845 1045.5h1M846 1046.5h2M848 1047.5h1M849 1048.5h4M853 1047.5h28M881 1048.5h4M885 1049.5h3M888 1050.5h4M892 1051.5h13M905 1052.5h3M908 1051.5h2M910 1050.5h2M912 1049.5h1M913 1048.5h2M915 1047.5h2M917 1046.5h2M919 1045.5h2M921 1044.5h2M923 1043.5h2M925 1042.5h2M927 1041.5h5M932 1040.5h16M948 1039.5h3M951 1038.5h12M963 1037.5h2M965 1036.5h2M967 1035.5h18M985 1034.5h2M987 1033.5h9M996 1034.5h4M1000 1033.5h10M1010 1032.5h2M1012 1031.5h8M1020 1030.5h1M1021 1029.5h2M1023 1028.5h1M1024 1027.5h9M1033 1026.5h2M1035 1025.5h8M1043 1024.5h6M1049 1023.5h5M1054 1022.5h7M1061 1021.5h21M1082 1020.5h45M1127 1021.5h21M1148 1022.5h26M1174 1021.5h7M1181 1022.5h5M1186 1023.5h1M1189 1019.5h20M1209 1018.5h7M1216 1017.5h1M1230 1074.5h1M1231 1073.5h2M1235 1068.5h1M1237 1065.5h3M1246 1058.5h5M1262 1006.5h2M1264 1005.5h1M1265 1004.5h1M1266 1003.5h1M1267 1002.5h2M1269 1001.5h1M1270 1000.5h1M1271 999.5h8M1279 1000.5h2M1281 999.5h1M1286 990.5h1M1288 987.5h1M1289 986.5h1M1291 983.5h1M1298 967.5h3M1301 966.5h3M1304 965.5h2M1306 964.5h4M145.5 1032v2M148.5 1028v2M209.5 1032v2M212.5 1036v2M214.5 1039v2M215.5 1041v2M216.5 1043v2M217.5 1045v2M218.5 1047v2M219.5 1049v2M220.5 1051v2M221.5 1053v3M222.5 1056v2M223.5 1058v3M224.5 1061v2M225.5 1063v3M226.5 1066v2M227.5 1068v3M228.5 1071v2M229.5 1073v2M230.5 1075v2M264.5 1085v3M265.5 1080v5M266.5 1075v5M267.5 1071v4M268.5 1067v4M269.5 1064v3M270.5 1060v4M271.5 1058v2M272.5 1060v3M273.5 1063v3M274.5 1066v4M275.5 1070v4M276.5 1074v3M277.5 1077v2M280.5 1081v2M287.5 1082v3M288.5 1076v6M289.5 1070v6M290.5 1065v5M291.5 1059v6M292.5 1054v5M293.5 1048v6M294.5 1043v5M295.5 1039v4M296.5 1035v4M297.5 1031v4M298.5 1027v4M299.5 1024v3M300.5 1026v4M301.5 1030v4M302.5 1034v3M303.5 1037v4M304.5 1041v3M305.5 1044v4M306.5 1048v4M307.5 1052v3M308.5 1055v4M309.5 1059v4M310.5 1063v2M311.5 1061v2M312.5 1059v2M313.5 1057v2M314.5 1055v2M315.5 1053v2M316.5 1051v2M317.5 1048v3M318.5 1045v3M319.5 1043v2M320.5 1040v3M321.5 1038v2M467.5 1052v2M491.5 1066v2M494.5 1062v2M507.5 1048v2M511.5 1043v2M512.5 1041v2M514.5 1038v2M516.5 1035v2M517.5 1033v2M519.5 1030v2M595.5 1036v2M597.5 1033v2M647.5 1024v2M648.5 1026v2M649.5 1028v3M650.5 1031v2M651.5 1033v3M652.5 1036v2M653.5 1038v2M654.5 1040v3M655.5 1043v2M656.5 1045v3M657.5 1048v3M658.5 1051v2M659.5 1053v3M660.5 1056v2M661.5 1058v4M662.5 1062v4M663.5 1066v4M664.5 1070v5M665.5 1075v5M666.5 1080v5M667.5 1085v5M668.5 1090v4M669.5 1094v3M670.5 1097v2M671.5 1099v2M672.5 1101v2M674.5 1104v2M685.5 1097v2M687.5 1094v2M689.5 1091v2M692.5 1087v2M769.5 1066v4M770.5 1060v6M771.5 1055v5M772.5 1050v5M773.5 1047v3M774.5 1050v5M775.5 1055v5M776.5 1060v4M777.5 1064v4M778.5 1068v3M786.5 1068v7M787.5 1054v14M788.5 1040v14M789.5 1026v14M790.5 1014v12M791.5 1009v10M792.5 1019v17M793.5 1036v16M794.5 1052v16M795.5 1068v9M802.5 1074v6M803.5 1063v11M804.5 1052v11M805.5 1041v11M806.5 1033v8M807.5 1027v6M808.5 1024v4M809.5 1028v6M810.5 1034v7M811.5 1041v8M812.5 1049v8M813.5 1057v7M814.5 1064v8M815.5 1072v7M816.5 1079v4M820.5 1078v7M821.5 1066v12M822.5 1056v10M823.5 1047v9M824.5 1039v8M825.5 1034v5M829.5 1037v4M830.5 1041v8M831.5 1049v8M832.5 1057v8M833.5 1065v4M836.5 1067v3M837.5 1063v4M838.5 1059v4M839.5 1056v3M840.5 1052v4M841.5 1050v2M843.5 1047v2M1187.5 1022v2M1188.5 1020v2M1217.5 1017v3M1218.5 1020v4M1219.5 1024v3M1220.5 1027v2M1221.5 1029v2M1222.5 1031v3M1223.5 1034v2M1224.5 1036v5M1225.5 1041v8M1226.5 1049v7M1227.5 1056v8M1228.5 1064v7M1229.5 1071v4M1233.5 1071v2M1234.5 1069v2M1236.5 1066v2M1240.5 1059v7M1241.5 1049v10M1242.5 1043v6M1243.5 1040v5M1244.5 1045v9M1245.5 1054v5M1251.5 1052v6M1252.5 1040v12M1253.5 1034v6M1254.5 1038v6M1255.5 1044v6M1256.5 1048v5M1257.5 1040v8M1258.5 1031v9M1259.5 1021v10M1260.5 1012v9M1261.5 1007v5M1282.5 997v2M1283.5 995v2M1284.5 993v2M1285.5 991v2M1287.5 988v2M1290.5 984v2M1292.5 981v2M1293.5 978v3M1294.5 975v3M1295.5 972v3M1296.5 970v2M1297.5 968v2"/><rect x="59" y="961" width="1252" height="1" fill="#000"/><rect x="59" y="1107" width="1252" height="1" fill="#000"/><rect x="59" y="961" width="1" height="147" fill="#000"/><rect x="1310" y="961" width="1" height="147" fill="#000"/><rect x="66" y="1110" width="1" height="2" fill="#000"/><rect x="80" y="1110" width="1" height="2" fill="#000"/><rect x="93" y="1110" width="1" height="2" fill="#000"/><rect x="107" y="1110" width="1" height="6" fill="#000"/><rect x="121" y="1110" width="1" height="2" fill="#000"/><rect x="135" y="1110" width="1" height="2" fill="#000"/><rect x="149" y="1110" width="1" height="2" fill="#000"/><rect x="163" y="1110" width="1" height="2" fill="#000"/><rect x="176" y="1110" width="1" height="4" fill="#000"/><rect x="190" y="1110" width="1" height="2" fill="#000"/><rect x="204" y="1110" width="1" height="2" fill="#000"/><rect x="218" y="1110" width="1" height="2" fill="#000"/><rect x="232" y="1110" width="1" height="2" fill="#000"/><rect x="246" y="1110" width="1" height="6" fill="#000"/><rect x="259" y="1110" width="1" height="2" fill="#000"/><rect x="273" y="1110" width="1" height="2" fill="#000"/><rect x="287" y="1110" width="1" height="2" fill="#000"/><rect x="301" y="1110" width="1" height="2" fill="#000"/><rect x="315" y="1110" width="1" height="4" fill="#000"/><rect x="329" y="1110" width="1" height="2" fill="#000"/><rect x="342" y="1110" width="1" height="2" fill="#000"/><rect x="356" y="1110" width="1" height="2" fill="#000"/><rect x="370" y="1110" width="1" height="2" fill="#000"/><rect x="384" y="1110" width="1" height="6" fill="#000"/><rect x="398" y="1110" width="1" height="2" fill="#000"/><rect x="412" y="1110" width="1" height="2" fill="#000"/><rect x="425" y="1110" width="1" height="2" fill="#000"/><rect x="439" y="1110" width="1" height="2" fill="#000"/><rect x="453" y="1110" width="1" height="4" fill="#000"/><rect x="467" y="1110" width="1" height="2" fill="#000"/><rect x="481" y="1110" width="1" height="2" fill="#000"/><rect x="495" y="1110" width="1" height="2" fill="#000"/><rect x="509" y="1110" width="1" height="2" fill="#000"/><rect x="522" y="1110" width="1" height="6" fill="#000"/><rect x="536" y="1110" width="1" height="2" fill="#000"/><rect x="550" y="1110" width="1" height="2" fill="#000"/><rect x="564" y="1110" width="1" height="2" fill="#000"/><rect x="578" y="1110" width="1" height="2" fill="#000"/><rect x="592" y="1110" width="1" height="4" fill="#000"/><rect x="605" y="1110" width="1" height="2" fill="#000"/><rect x="619" y="1110" width="1" height="2" fill="#000"/><rect x="633" y="1110" width="1" height="2" fill="#000"/><rect x="647" y="1110" width="1" height="2" fill="#000"/><rect x="661" y="1110" width="1" height="6" fill="#000"/><rect x="675" y="1110" width="1" height="2" fill="#000"/><rect x="688" y="1110" width="1" height="2" fill="#000"/><rect x="702" y="1110" width="1" height="2" fill="#000"/><rect x="716" y="1110" width="1" height="2" fill="#000"/><rect x="730" y="1110" width="1" height="4" fill="#000"/><rect x="744" y="1110" width="1" height="2" fill="#000"/><rect x="758" y="1110" width="1" height="2" fill="#000"/><rect x="771" y="1110" width="1" height="2" fill="#000"/><rect x="785" y="1110" width="1" height="2" fill="#000"/><rect x="799" y="1110" width="1" height="6" fill="#000"/><rect x="813" y="1110" width="1" height="2" fill="#000"/><rect x="827" y="1110" width="1" height="2" fill="#000"/><rect x="841" y="1110" width="1" height="2" fill="#000"/><rect x="854" y="1110" width="1" height="2" fill="#000"/><rect x="868" y="1110" width="1" height="4" fill="#000"/><rect x="882" y="1110" width="1" height="2" fill="#000"/><rect x="896" y="1110" width="1" height="2" fill="#000"/><rect x="910" y="1110" width="1" height="2" fill="#000"/><rect x="924" y="1110" width="1" height="2" fill="#000"/><rect x="937" y="1110" width="1" height="6" fill="#000"/><rect x="951" y="1110" width="1" height="2" fill="#000"/><rect x="965" y="1110" width="1" height="2" fill="#000"/><rect x="979" y="1110" width="1" height="2" fill="#000"/><rect x="993" y="1110" width="1" height="2" fill="#000"/><rect x="1007" y="1110" width="1" height="4" fill="#000"/><rect x="1020" y="1110" width="1" height="2" fill="#000"/><rect x="1034" y="1110" width="1" height="2" fill="#000"/><rect x="1048" y="1110" width="1" height="2" fill="#000"/><rect x="1062" y="1110" width="1" height="2" fill="#000"/><rect x="1076" y="1110" width="1" height="6" fill="#000"/><rect x="1090" y="1110" width="1" height="2" fill="#000"/><rect x="1103" y="1110" width="1" height="2" fill="#000"/><rect x="1117" y="1110" width="1" height="2" fill="#000"/><rect x="1131" y="1110" width="1" height="2" fill="#000"/><rect x="1145" y="1110" width="1" height="4" fill="#000"/><rect x="1159" y="1110" width="1" height="2" fill="#000"/><rect x="1173" y="1110" width="1" height="2" fill="#000"/><rect x="1187" y="1110" width="1" height="2" fill="#000"/><rect x="1200" y="1110" width="1" height="2" fill="#000"/><rect x="1214" y="1110" width="1" height="6" fill="#000"/><rect x="1228" y="1110" width="1" height="2" fill="#000"/><rect x="1242" y="1110" width="1" height="2" fill="#000"/><rect x="1256" y="1110" width="1" height="2" fill="#000"/><rect x="1270" y="1110" width="1" height="2" fill="#000"/><rect x="1283" y="1110" width="1" height="4" fill="#000"/><rect x="1297" y="1110" width="1" height="2" fill="#000"/><rect x="51" y="1093" width="6" height="1" fill="#000"/><rect x="51" y="1077" width="6" height="1" fill="#000"/><rect x="51" y="1060" width="6" height="1" fill="#000"/><rect x="51" y="1044" width="6" height="1" fill="#000"/><rect x="51" y="1027" width="6" height="1" fill="#000"/><rect x="51" y="1011" width="6" height="1" fill="#000"/><rect x="51" y="994" width="6" height="1" fill="#000"/><rect x="51" y="978" width="6" height="1" fill="#000"/><rect x="51" y="962" width="6" height="1" fill="#000"/><rect x="55" y="1105" width="2" height="1" fill="#000"/><rect x="53" y="1101" width="4" height="1" fill="#000"/><rect x="55" y="1097" width="2" height="1" fill="#000"/><rect x="55" y="1089" width="2" height="1" fill="#000"/><rect x="53" y="1085" width="4" height="1" fill="#000"/><rect x="55" y="1081" width="2" height="1" fill="#000"/><rect x="55" y="1072" width="2" height="1" fill="#000"/><rect x="53" y="1068" width="4" height="1" fill="#000"/><rect x="55" y="1064" width="2" height="1" fill="#000"/><rect x="55" y="1056" width="2" height="1" fill="#000"/><rect x="53" y="1052" width="4" height="1" fill="#000"/><rect x="55" y="1048" width="2" height="1" fill="#000"/><rect x="55" y="1040" width="2" height="1" fill="#000"/><rect x="53" y="1036" width="4" height="1" fill="#000"/><rect x="55" y="1031" width="2" height="1" fill="#000"/><rect x="55" y="1023" width="2" height="1" fill="#000"/><rect x="53" y="1019" width="4" height="1" fill="#000"/><rect x="55" y="1015" width="2" height="1" fill="#000"/><rect x="55" y="1007" width="2" height="1" fill="#000"/><rect x="53" y="1003" width="4" height="1" fill="#000"/><rect x="55" y="999" width="2" height="1" fill="#000"/><rect x="55" y="990" width="2" height="1" fill="#000"/><rect x="53" y="986" width="4" height="1" fill="#000"/><rect x="55" y="982" width="2" height="1" fill="#000"/><rect x="55" y="974" width="2" height="1" fill="#000"/><rect x="53" y="970" width="4" height="1" fill="#000"/><rect x="55" y="966" width="2" height="1" fill="#000"/></svg>
<svg width="1337" height="1154" viewBox="0 0 1337 1154" shape-rendering="crispEdges"><g fill="#000"><rect x="157" y="52" width="7" height="1"/><rect x="158" y="53" width="5" height="1"/><rect x="159" y="54" width="3" height="1"/><rect x="160" y="55" width="1" height="1"/></g><g fill="#fff"><rect x="292" y="53" width="7" height="1"/><rect x="293" y="54" width="5" height="1"/><rect x="294" y="55" width="3" height="1"/><rect x="295" y="56" width="1" height="1"/></g><g fill="#808080"><rect x="291" y="52" width="7" height="1"/><rect x="292" y="53" width="5" height="1"/><rect x="293" y="54" width="3" height="1"/><rect x="294" y="55" width="1" height="1"/></g><g fill="#fff"><rect x="466" y="53" width="7" height="1"/><rect x="467" y="54" width="5" height="1"/><rect x="468" y="55" width="3" height="1"/><rect x="469" y="56" width="1" height="1"/></g><g fill="#808080"><rect x="465" y="52" width="7" height="1"/><rect x="466" y="53" width="5" height="1"/><rect x="467" y="54" width="3" height="1"/><rect x="468" y="55" width="1" height="1"/></g><g fill="#000"><rect x="6" y="248" width="1" height="1"/><rect x="7" y="247" width="1" height="3"/><rect x="8" y="246" width="1" height="5"/><rect x="9" y="245" width="1" height="7"/></g><g fill="#000"><rect x="1305" y="245" width="1" height="7"/><rect x="1306" y="246" width="1" height="5"/><rect x="1307" y="247" width="1" height="3"/><rect x="1308" y="248" width="1" height="1"/></g><g fill="#000"><rect x="1322" y="45" width="1" height="1"/><rect x="1321" y="46" width="3" height="1"/><rect x="1320" y="47" width="5" height="1"/><rect x="1319" y="48" width="7" height="1"/></g><g fill="#000"><rect x="1319" y="231" width="7" height="1"/><rect x="1320" y="232" width="5" height="1"/><rect x="1321" y="233" width="3" height="1"/><rect x="1322" y="234" width="1" height="1"/></g><g fill="#000"><rect x="157" y="274" width="7" height="1"/><rect x="158" y="275" width="5" height="1"/><rect x="159" y="276" width="3" height="1"/><rect x="160" y="277" width="1" height="1"/></g><g fill="#fff"><rect x="292" y="275" width="7" height="1"/><rect x="293" y="276" width="5" height="1"/><rect x="294" y="277" width="3" height="1"/><rect x="295" y="278" width="1" height="1"/></g><g fill="#808080"><rect x="291" y="274" width="7" height="1"/><rect x="292" y="275" width="5" height="1"/><rect x="293" y="276" width="3" height="1"/><rect x="294" y="277" width="1" height="1"/></g><g fill="#fff"><rect x="466" y="275" width="7" height="1"/><rect x="467" y="276" width="5" height="1"/><rect x="468" y="277" width="3" height="1"/><rect x="469" y="278" width="1" height="1"/></g><g fill="#808080"><rect x="465" y="274" width="7" height="1"/><rect x="466" y="275" width="5" height="1"/><rect x="467" y="276" width="3" height="1"/><rect x="468" y="277" width="1" height="1"/></g><g fill="#000"><rect x="6" y="471" width="1" height="1"/><rect x="7" y="470" width="1" height="3"/><rect x="8" y="469" width="1" height="5"/><rect x="9" y="468" width="1" height="7"/></g><g fill="#000"><rect x="1321" y="468" width="1" height="7"/><rect x="1322" y="469" width="1" height="5"/><rect x="1323" y="470" width="1" height="3"/><rect x="1324" y="471" width="1" height="1"/></g><g fill="#000"><rect x="157" y="497" width="7" height="1"/><rect x="158" y="498" width="5" height="1"/><rect x="159" y="499" width="3" height="1"/><rect x="160" y="500" width="1" height="1"/></g><g fill="#fff"><rect x="292" y="498" width="7" height="1"/><rect x="293" y="499" width="5" height="1"/><rect x="294" y="500" width="3" height="1"/><rect x="295" y="501" width="1" height="1"/></g><g fill="#808080"><rect x="291" y="497" width="7" height="1"/><rect x="292" y="498" width="5" height="1"/><rect x="293" y="499" width="3" height="1"/><rect x="294" y="500" width="1" height="1"/></g><g fill="#fff"><rect x="466" y="498" width="7" height="1"/><rect x="467" y="499" width="5" height="1"/><rect x="468" y="500" width="3" height="1"/><rect x="469" y="501" width="1" height="1"/></g><g fill="#808080"><rect x="465" y="497" width="7" height="1"/><rect x="466" y="498" width="5" height="1"/><rect x="467" y="499" width="3" height="1"/><rect x="468" y="500" width="1" height="1"/></g><g fill="#000"><rect x="6" y="694" width="1" height="1"/><rect x="7" y="693" width="1" height="3"/><rect x="8" y="692" width="1" height="5"/><rect x="9" y="691" width="1" height="7"/></g><g fill="#000"><rect x="1321" y="691" width="1" height="7"/><rect x="1322" y="692" width="1" height="5"/><rect x="1323" y="693" width="1" height="3"/><rect x="1324" y="694" width="1" height="1"/></g><g fill="#000"><rect x="157" y="720" width="7" height="1"/><rect x="158" y="721" width="5" height="1"/><rect x="159" y="722" width="3" height="1"/><rect x="160" y="723" width="1" height="1"/></g><g fill="#fff"><rect x="292" y="721" width="7" height="1"/><rect x="293" y="722" width="5" height="1"/><rect x="294" y="723" width="3" height="1"/><rect x="295" y="724" width="1" height="1"/></g><g fill="#808080"><rect x="291" y="720" width="7" height="1"/><rect x="292" y="721" width="5" height="1"/><rect x="293" y="722" width="3" height="1"/><rect x="294" y="723" width="1" height="1"/></g><g fill="#fff"><rect x="466" y="721" width="7" height="1"/><rect x="467" y="722" width="5" height="1"/><rect x="468" y="723" width="3" height="1"/><rect x="469" y="724" width="1" height="1"/></g><g fill="#808080"><rect x="465" y="720" width="7" height="1"/><rect x="466" y="721" width="5" height="1"/><rect x="467" y="722" width="3" height="1"/><rect x="468" y="723" width="1" height="1"/></g><g fill="#000"><rect x="6" y="917" width="1" height="1"/><rect x="7" y="916" width="1" height="3"/><rect x="8" y="915" width="1" height="5"/><rect x="9" y="914" width="1" height="7"/></g><g fill="#000"><rect x="1305" y="914" width="1" height="7"/><rect x="1306" y="915" width="1" height="5"/><rect x="1307" y="916" width="1" height="3"/><rect x="1308" y="917" width="1" height="1"/></g><g fill="#000"><rect x="1322" y="713" width="1" height="1"/><rect x="1321" y="714" width="3" height="1"/><rect x="1320" y="715" width="5" height="1"/><rect x="1319" y="716" width="7" height="1"/></g><g fill="#000"><rect x="1319" y="900" width="7" height="1"/><rect x="1320" y="901" width="5" height="1"/><rect x="1321" y="902" width="3" height="1"/><rect x="1322" y="903" width="1" height="1"/></g><g fill="#000"><rect x="157" y="943" width="7" height="1"/><rect x="158" y="944" width="5" height="1"/><rect x="159" y="945" width="3" height="1"/><rect x="160" y="946" width="1" height="1"/></g><g fill="#000"><rect x="291" y="943" width="7" height="1"/><rect x="292" y="944" width="5" height="1"/><rect x="293" y="945" width="3" height="1"/><rect x="294" y="946" width="1" height="1"/></g><g fill="#fff"><rect x="466" y="944" width="7" height="1"/><rect x="467" y="945" width="5" height="1"/><rect x="468" y="946" width="3" height="1"/><rect x="469" y="947" width="1" height="1"/></g><g fill="#808080"><rect x="465" y="943" width="7" height="1"/><rect x="466" y="944" width="5" height="1"/><rect x="467" y="945" width="3" height="1"/><rect x="468" y="946" width="1" height="1"/></g><g fill="#000"><rect x="6" y="1140" width="1" height="1"/><rect x="7" y="1139" width="1" height="3"/><rect x="8" y="1138" width="1" height="5"/><rect x="9" y="1137" width="1" height="7"/></g><g fill="#000"><rect x="1305" y="1137" width="1" height="7"/><rect x="1306" y="1138" width="1" height="5"/><rect x="1307" y="1139" width="1" height="3"/><rect x="1308" y="1140" width="1" height="1"/></g><g fill="#000"><rect x="1322" y="936" width="1" height="1"/><rect x="1321" y="937" width="3" height="1"/><rect x="1320" y="938" width="5" height="1"/><rect x="1319" y="939" width="7" height="1"/></g><g fill="#000"><rect x="1319" y="1123" width="7" height="1"/><rect x="1320" y="1124" width="5" height="1"/><rect x="1321" y="1125" width="3" height="1"/><rect x="1322" y="1126" width="1" height="1"/></g></svg>
</div></body></html>
